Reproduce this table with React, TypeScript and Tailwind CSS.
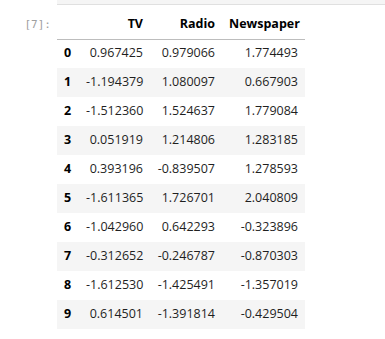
const columns = ['TV', 'Radio', 'Newspaper'];

const rows: string[][] = [
    ['0.967425', '0.979066', '1.774493'],
    ['-1.194379', '1.080097', '0.667903'],
    ['-1.512360', '1.524637', '1.779084'],
    ['0.051919', '1.214806', '1.283185'],
    ['0.393196', '-0.839507', '1.278593'],
    ['-1.611365', '1.726701', '2.040809'],
    ['-1.042960', '0.642293', '-0.323896'],
    ['-0.312652', '-0.246787', '-0.870303'],
    ['-1.612530', '-1.425491', '-1.357019'],
    ['0.614501', '-1.391814', '-0.429504'],
];

const colWidths = ['w-[71px]', 'w-[72px]', 'w-[83px]'];

export default function App() {
    return (
        <div className="w-[385px] h-[339px] bg-white overflow-hidden font-['Open_Sans',sans-serif] text-[12.5px] text-[#1f1f1f]">
            {/* previous cell output, cut off at the top */}
            <div className="ml-[57px] h-[5px] bg-[#f5f5f5] border-b border-[#e0e0e0]" />

            <div className="flex mt-[6px]">
                <div className="w-[57px] pr-[6px] h-[28px] flex items-center justify-end font-['DejaVu_Sans_Mono',monospace] text-[11px] text-[#a0a0a0]">
                    [7]:
                </div>
                <table className="border-collapse table-fixed w-[248px]">
                    <thead>
                        <tr className="h-[28px] border-b border-[#bdbdbd]">
                            <th className="w-[22px]" />
                            {columns.map((c, i) => (
                                <th key={c} className={`${colWidths[i]} px-[7px] text-right font-bold text-black`}>
                                    {c}
                                </th>
                            ))}
                        </tr>
                    </thead>
                    <tbody>
                        {rows.map((r, idx) => (
                            <tr key={idx} className={`h-[29px] ${idx % 2 === 1 ? 'bg-[#f5f5f5]' : ''}`}>
                                <td className="pl-[7px] font-bold text-black text-left">{idx}</td>
                                {r.map((v, j) => (
                                    <td key={j} className="px-[7px] text-right">
                                        {v}
                                    </td>
                                ))}
                            </tr>
                        ))}
                    </tbody>
                </table>
            </div>
        </div>
    );
}
